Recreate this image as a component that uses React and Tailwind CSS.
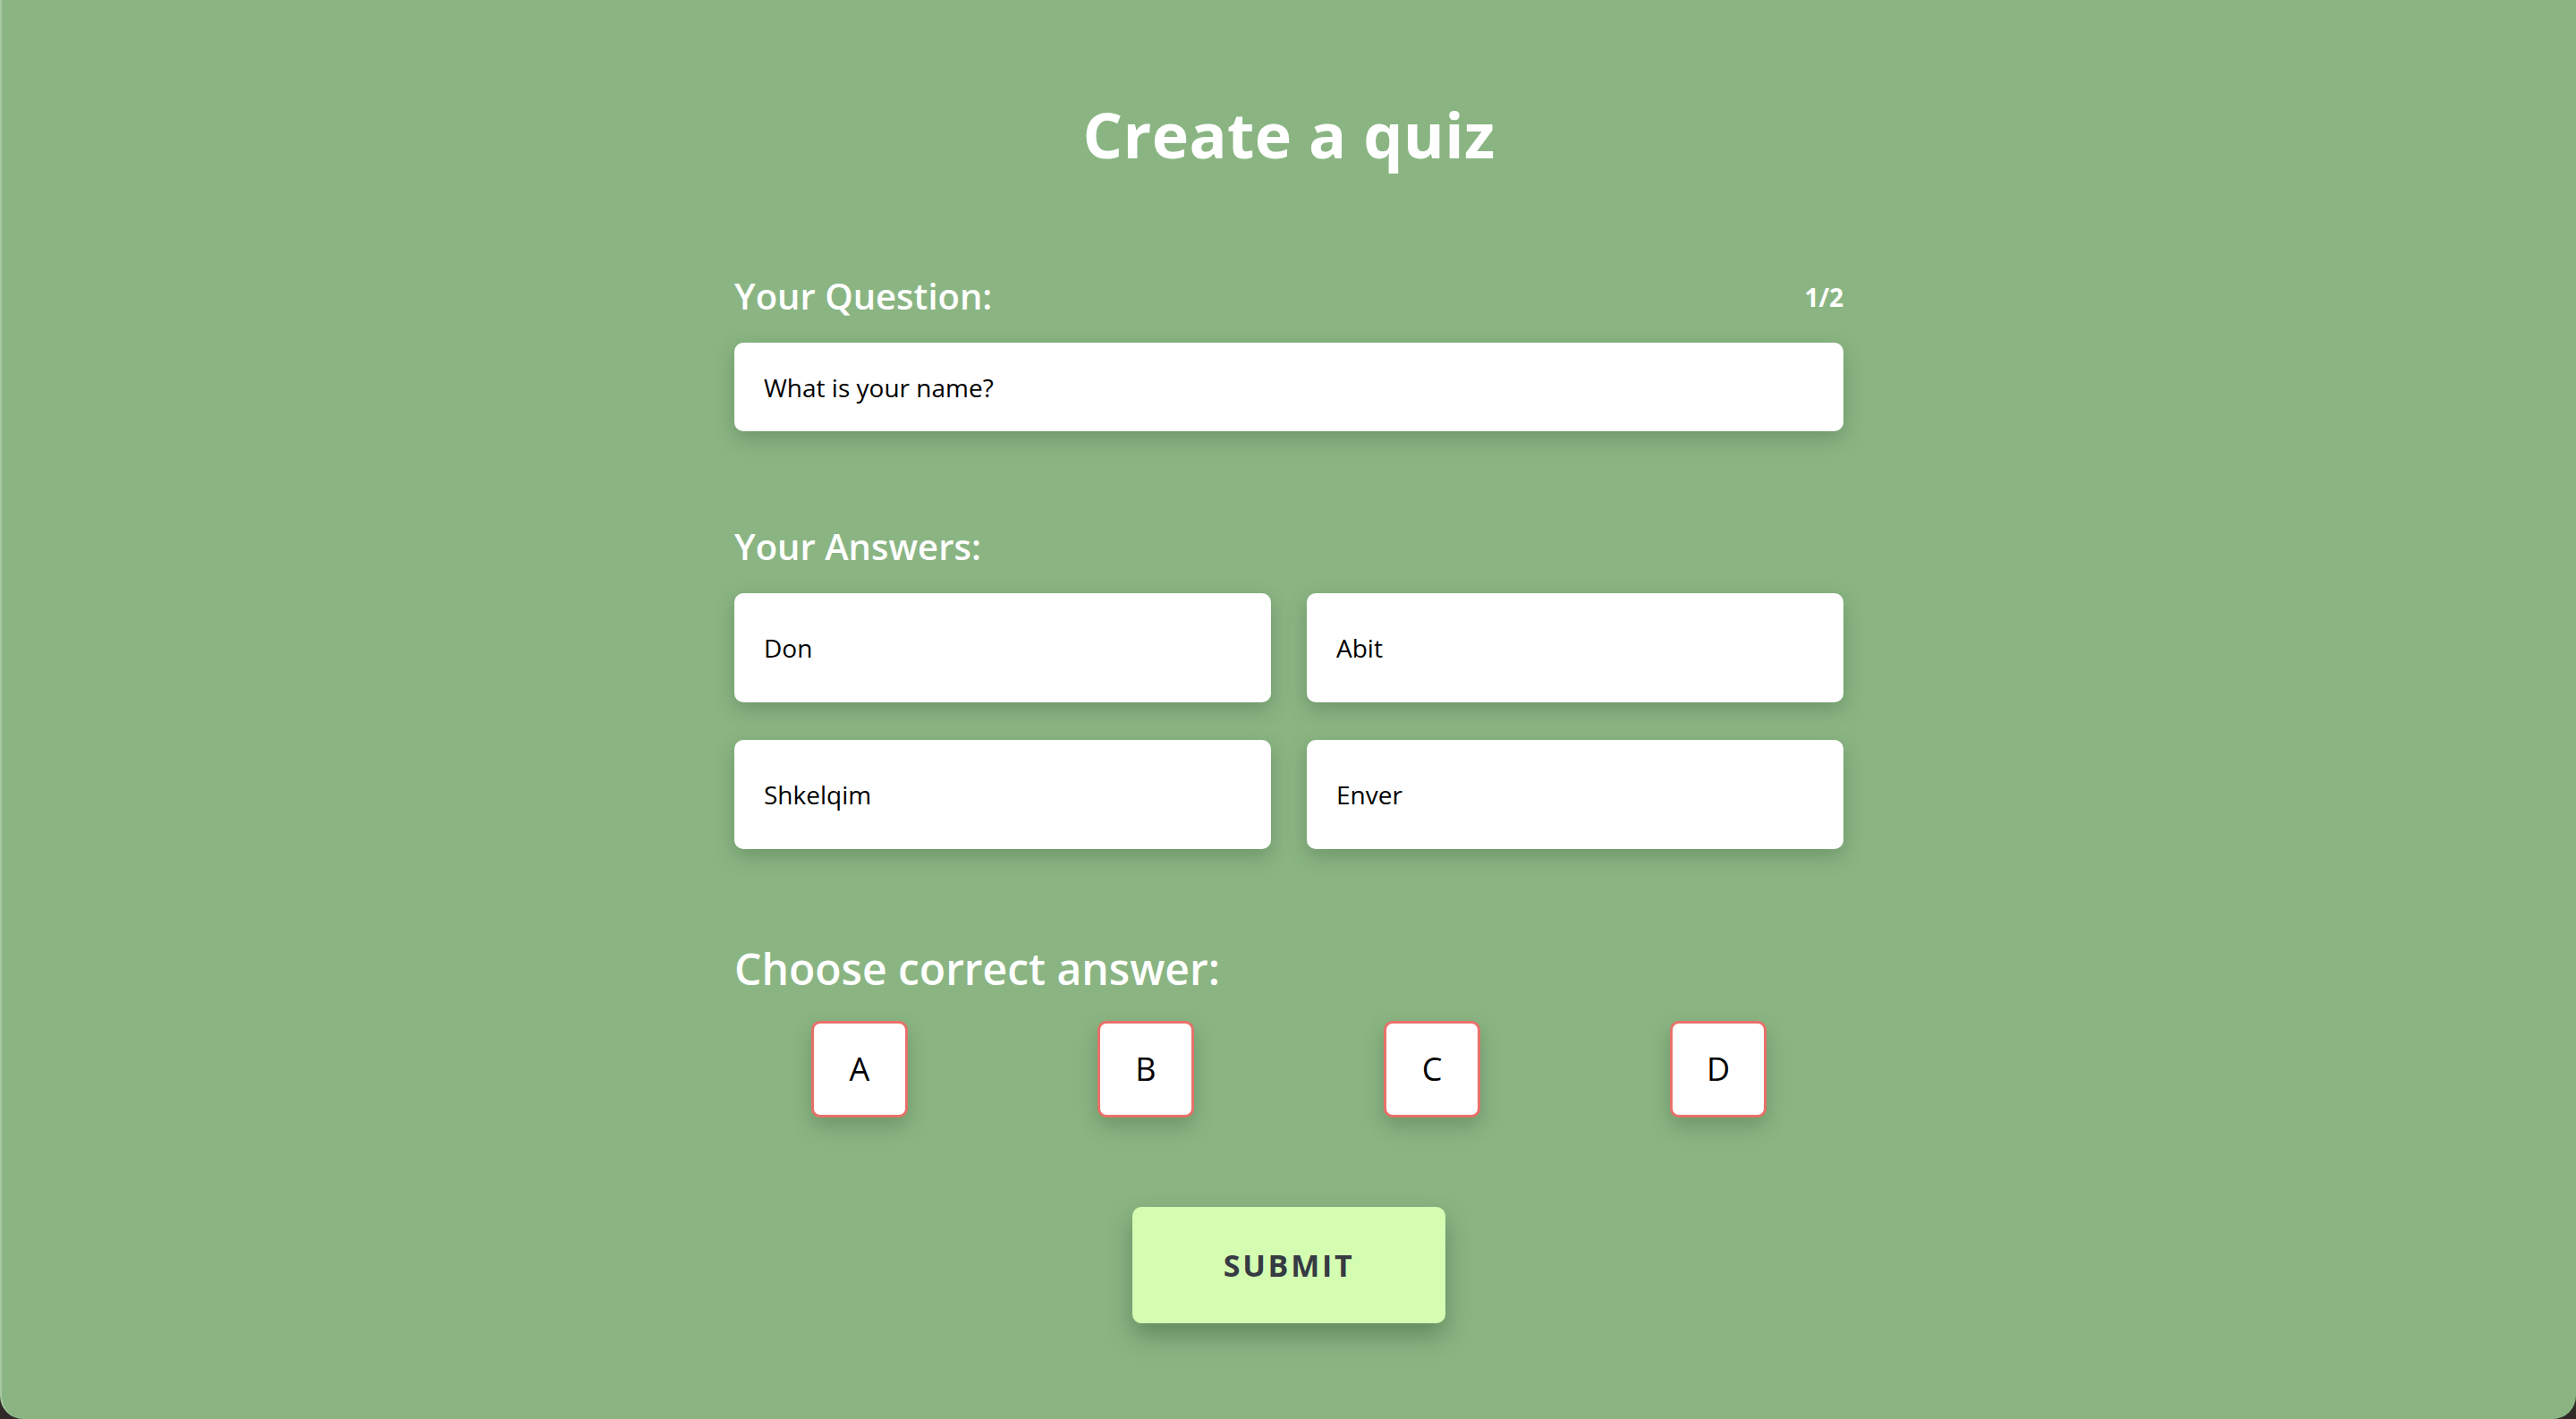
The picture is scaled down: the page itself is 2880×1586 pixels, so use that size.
import React from "react";

const font = { fontFamily: '"Open Sans", "Noto Sans", sans-serif' };

function Field({ value, className = "" }) {
  return (
    <div
      className={`flex items-center bg-white rounded-[10px] pl-[33px] text-[28px] text-black shadow-[0_8px_22px_rgba(40,70,35,0.28)] ${className}`}
    >
      {value}
    </div>
  );
}

function Letter({ l }) {
  return (
    <div className="flex justify-center">
      <div className="w-[108px] h-[108px] bg-white rounded-[10px] border-[3px] border-[#e8706a] flex items-center justify-center text-[36px] text-black shadow-[0_10px_22px_rgba(40,70,35,0.28)]">
        {l}
      </div>
    </div>
  );
}

export default function App() {
  return (
    <div className="w-[2880px] h-[1586px] bg-[#2f2a27] overflow-hidden" style={font}>
      <div className="h-full bg-[#8ab583] rounded-b-[26px] border-l-[2px] border-[#a7c8a0] flex flex-col items-center">
        <h1 className="pt-[115px] text-[70px] leading-none font-bold text-white tracking-[0.005em]">
          Create a quiz
        </h1>
        <div className="w-[1240px] flex flex-col mt-[126px]">
          <div className="flex items-end justify-between">
            <div className="text-[40px] leading-none font-semibold text-white">Your Question:</div>
            <div className="text-[28px] leading-none font-bold text-white mb-[5px]">1/2</div>
          </div>
          <Field value="What is your name?" className="mt-[32px] h-[99px]" />
          <div className="mt-[109px] text-[40px] leading-none font-semibold text-white">Your Answers:</div>
          <div className="mt-[32px] grid grid-cols-2 gap-x-[40px] gap-y-[42px]">
            <Field value="Don" className="h-[122px]" />
            <Field value="Abit" className="h-[122px]" />
            <Field value="Shkelqim" className="h-[122px]" />
            <Field value="Enver" className="h-[122px]" />
          </div>
          <div className="mt-[110px] text-[48px] leading-none font-semibold text-white">
            Choose correct answer:
          </div>
          <div className="mt-[34px] w-[1280px] -ml-[20px] grid grid-cols-4">
            <Letter l="A" />
            <Letter l="B" />
            <Letter l="C" />
            <Letter l="D" />
          </div>
          <div className="mt-[100px] flex justify-center">
            <button className="w-[350px] h-[130px] rounded-[10px] bg-[#d4fdb2] text-[#363a43] text-[34px] font-bold tracking-[0.08em] shadow-[0_14px_28px_rgba(30,55,25,0.35)]">
              SUBMIT
            </button>
          </div>
        </div>
      </div>
    </div>
  );
}
